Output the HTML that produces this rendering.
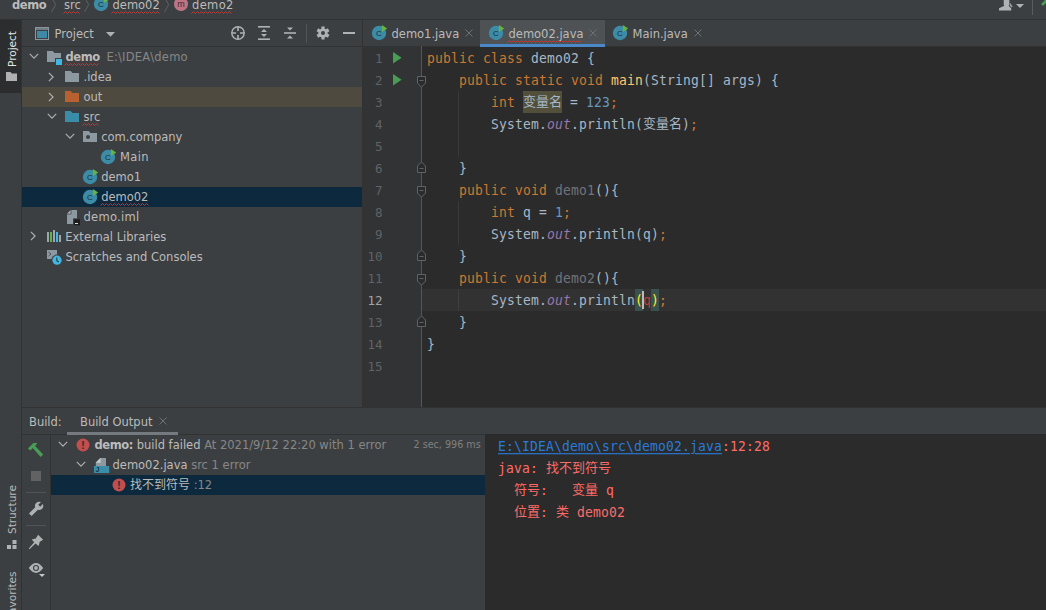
<!DOCTYPE html>
<html lang="zh">
<head>
<meta charset="utf-8">
<title>demo – demo02.java</title>
<style>
*{box-sizing:border-box;margin:0;padding:0}
html,body{width:1046px;height:610px;overflow:hidden;background:#3c3f41}
body{position:relative;font:11.5px/20px "DejaVu Sans","Liberation Sans","Noto Sans CJK SC",sans-serif;color:#bbbbbb}
.abs{position:absolute}
.t{position:absolute;white-space:pre;line-height:20px;height:20px}
.b,b{font-weight:bold;letter-spacing:-0.4px}
.g{color:#878787}
svg{position:absolute;overflow:visible}
.mono{font-family:"DejaVu Sans Mono","Liberation Mono","Noto Sans CJK SC",monospace;font-size:13px;letter-spacing:0.174px}
.cj{letter-spacing:0;font-family:"Noto Sans CJK SC",sans-serif;font-size:13px;line-height:0}
.code{position:absolute;left:427px;white-space:pre;height:22px;line-height:22px;color:#a9b7c6}
.code,.con{transform:scaleY(1.1);transform-origin:0 15.5px}
.code .cj,.con .cj{display:inline-block;transform:scaleY(.909);transform-origin:0 70%}
.k{color:#cc7832}.n{color:#6897bb}.m{color:#ffc66d}.u{color:#72737a}.f{color:#9876aa;font-style:italic}
.ln{position:absolute;left:363px;width:19.5px;font-size:12.5px!important;letter-spacing:0!important;text-align:right;height:22px;line-height:22px;color:#606366}
.con{position:absolute;left:498px;white-space:pre;height:22px;line-height:22px;color:#ff6b68}
</style>
</head>
<body>
<!-- ===== navigation bar ===== -->
<div class="abs" style="left:0px;top:19px;width:1046px;height:1px;background:#323232;"></div>
<div class="t b" style="left:12px;top:-5px;">demo</div>
<svg style="left:51px;top:0px" width="8" height="16" ><path d="M0.5 -2.7 L4.7 4.6 L0.5 11.9" fill="none" stroke="#5e6163" stroke-width="1"/></svg>
<div class="t " style="left:64px;top:-5px;">src</div>
<svg style="left:0;top:0" width="1" height="1"><polyline points="63.5,13.5 65.5,11.5 67.5,13.5 69.5,11.5 71.5,13.5 73.5,11.5 75.5,13.5 77.5,11.5 79.5,13.5" fill="none" stroke="#bc3f3c" stroke-width="0.95"/></svg>
<svg style="left:84px;top:0px" width="8" height="16" ><path d="M0.5 -2.7 L4.7 4.6 L0.5 11.9" fill="none" stroke="#5e6163" stroke-width="1"/></svg>
<svg style="left:100.8px;top:4px" width="1" height="1"><circle cx="0" cy="0" r="7.2" fill="#3c8ca8"/><text x="-0.2" y="2.75" text-anchor="middle" font-family="Liberation Sans,sans-serif" font-size="8" fill="#182d37">C</text><path d="M2.9 -8 L8.2 -4.5 L2.9 -1.1Z" fill="#62b543"/></svg>
<div class="t " style="left:112.5px;top:-5px;">demo02</div>
<svg style="left:0;top:0" width="1" height="1"><polyline points="111.5,13.5 113.5,11.5 115.5,13.5 117.5,11.5 119.5,13.5 121.5,11.5 123.5,13.5 125.5,11.5 127.5,13.5 129.5,11.5 131.5,13.5 133.5,11.5 135.5,13.5 137.5,11.5 139.5,13.5 141.5,11.5 143.5,13.5 145.5,11.5 147.5,13.5 149.5,11.5 151.5,13.5 153.5,11.5 155.5,13.5 157.5,11.5 159.5,13.5" fill="none" stroke="#bc3f3c" stroke-width="0.95"/></svg>
<svg style="left:164px;top:0px" width="8" height="16" ><path d="M0.5 -2.7 L4.7 4.6 L0.5 11.9" fill="none" stroke="#5e6163" stroke-width="1"/></svg>
<svg style="left:174px;top:-3px" width="14" height="14" ><circle cx="7" cy="7" r="7" fill="#bf7485"/><text x="7" y="10.2" text-anchor="middle" font-family="Liberation Sans,sans-serif" font-size="9" fill="#3b2b30">m</text></svg>
<div class="t " style="left:192px;top:-5px;letter-spacing:.35px">demo2</div>
<svg style="left:0;top:0" width="1" height="1"><polyline points="191.5,13.5 193.5,11.5 195.5,13.5 197.5,11.5 199.5,13.5 201.5,11.5 203.5,13.5 205.5,11.5 207.5,13.5 209.5,11.5 211.5,13.5 213.5,11.5 215.5,13.5 217.5,11.5 219.5,13.5 221.5,11.5 223.5,13.5 225.5,11.5 227.5,13.5 229.5,11.5 231.5,13.5" fill="none" stroke="#bc3f3c" stroke-width="0.95"/></svg>
<svg style="left:999px;top:0px" width="14" height="11" ><path d="M4.7 0 H10.3 V4 Q10.3 5.3 9.5 5.8 L12.2 8.3 V10.6 H0 V8.3 L5.4 5.8 Q4.7 5.3 4.7 4Z" fill="#afb1b3"/><path d="M10.8 2.4 L13.6 6.6 L12.8 7.6 L10.6 5.6Z" fill="#a0a2a4"/></svg>
<svg style="left:1016px;top:4px" width="8" height="4" ><path d="M0 0 H8 L4 4Z" fill="#afb1b3"/></svg>
<div class="abs" style="left:1032px;top:0px;width:1px;height:15px;background:#5a5d5f;"></div>
<svg style="left:1040px;top:0px" width="6" height="6" ><path d="M1 4 L6 -1 L8 1 L3 6Z" fill="#499c54"/></svg>
<!-- ===== left tool stripe ===== -->
<div class="abs" style="left:21px;top:20px;width:1px;height:590px;background:#323232;"></div>
<div class="abs" style="left:0px;top:20px;width:21px;height:73px;background:#2b2d2e;"></div>
<div class="t " style="left:1.5px;top:66.5px;transform-origin:0 0;transform:rotate(-90deg);font-size:10.5px;color:#e4e4e4">Project</div>
<svg style="left:6px;top:72px" width="11" height="9" fill="#afb1b3"><path d="M0 0 H4.5 L5.8 1.6 H11 V9 H0Z"/></svg>
<div class="t " style="left:1.5px;top:533.5px;transform-origin:0 0;transform:rotate(-90deg);font-size:10.5px;">Structure</div>
<svg style="left:7px;top:540px" width="10" height="9" fill="#afb1b3"><rect x="5.5" y="0" width="4" height="4"/><rect x="0" y="5" width="4" height="4"/><rect x="5.5" y="5" width="4" height="4"/></svg>
<div class="t " style="left:1.5px;top:619px;transform-origin:0 0;transform:rotate(-90deg);font-size:10.5px;">Favorites</div>
<!-- ===== project tool window ===== -->
<svg style="left:35px;top:27px" width="14" height="13" ><rect x="0.5" y="0.5" width="13" height="12" fill="none" stroke="#8a969d"/><rect x="1" y="1" width="12" height="2" fill="#717c83"/><rect x="2" y="4" width="10" height="7" fill="#3e8aa6"/></svg>
<div class="t " style="left:54.5px;top:24px;">Project</div>
<svg style="left:106px;top:32px" width="9" height="5" ><path d="M0 0 H9 L4.5 4.8Z" fill="#afb1b3"/></svg>
<svg style="left:231px;top:26px" width="14" height="14" ><circle cx="7" cy="7" r="6.2" fill="none" stroke="#afb1b3" stroke-width="1.4"/><path d="M7 0.5V5M7 9V13.5M0.5 7H5M9 7H13.5" stroke="#afb1b3" stroke-width="1.6" fill="none"/></svg>
<svg style="left:258px;top:26px" width="12" height="14" fill="#afb1b3"><rect x="0" y="0" width="12" height="1.6"/><rect x="0" y="12.4" width="12" height="1.6"/><path d="M6 3 L9 6 H3Z"/><path d="M6 11 L9 8 H3Z"/></svg>
<svg style="left:284px;top:26px" width="12" height="14" fill="#afb1b3"><rect x="0" y="6.2" width="12" height="1.6"/><path d="M6 4.6 L9 1.4 H3Z"/><path d="M6 9.4 L9 12.6 H3Z"/></svg>
<div class="abs" style="left:306px;top:24px;width:1px;height:19px;background:#515456;"></div>
<svg style="left:316px;top:26px" width="14" height="14" ><g transform="translate(7 7)"><g fill="#afb1b3"><rect x="-1.6" y="-6.5" width="3.2" height="13"/><rect x="-1.6" y="-6.5" width="3.2" height="13" transform="rotate(60)"/><rect x="-1.6" y="-6.5" width="3.2" height="13" transform="rotate(120)"/><circle r="4.6"/></g><circle r="2" fill="#3c3f41"/></g></svg>
<div class="abs" style="left:343px;top:32px;width:12px;height:2px;background:#afb1b3;"></div>
<div class="abs" style="left:22px;top:46px;width:340px;height:1px;background:#323232;"></div>
<div class="abs" style="left:362px;top:20px;width:1px;height:388px;background:#323232;"></div>
<div class="abs" style="left:22px;top:87px;width:340px;height:20px;background:#4e4a3f;"></div>
<div class="abs" style="left:22px;top:187px;width:340px;height:20px;background:#0d293e;"></div>
<svg style="left:33.5px;top:56.4px" width="1" height="1"><path d="M-4.2 -2.1 L0 2.1 L4.2 -2.1" fill="none" stroke="#adb0b3" stroke-width="1.2"/></svg>
<svg style="left:47px;top:51px" width="14" height="11" fill="#8d99a1"><path d="M0 0 H5.8 L7.4 2 H14 V11 H0Z"/></svg>
<svg style="left:55px;top:58px" width="8" height="8" ><rect width="8" height="8" fill="#3c3f41"/><rect x="1" y="1" width="6" height="6" fill="#40b6e0"/></svg>
<div class="t b" style="left:65.5px;top:47px;">demo</div>
<svg style="left:0;top:0" width="1" height="1"><polyline points="64.5,65.5 66.5,63.5 68.5,65.5 70.5,63.5 72.5,65.5 74.5,63.5 76.5,65.5 78.5,63.5 80.5,65.5 82.5,63.5 84.5,65.5 86.5,63.5 88.5,65.5 90.5,63.5 92.5,65.5 94.5,63.5 96.5,65.5 98.5,63.5" fill="none" stroke="#bc3f3c" stroke-width="0.95"/></svg>
<div class="t g" style="left:106.5px;top:47px;letter-spacing:.2px">E:\IDEA\demo</div>
<svg style="left:51.3px;top:76.6px" width="1" height="1"><path d="M-2.1 -4.2 L2.1 0 L-2.1 4.2" fill="none" stroke="#adb0b3" stroke-width="1.2"/></svg>
<svg style="left:65px;top:71px" width="14" height="11" fill="#8d99a1"><path d="M0 0 H5.8 L7.4 2 H14 V11 H0Z"/></svg>
<div class="t " style="left:83.5px;top:67px;">.idea</div>
<svg style="left:51.3px;top:96.6px" width="1" height="1"><path d="M-2.1 -4.2 L2.1 0 L-2.1 4.2" fill="none" stroke="#adb0b3" stroke-width="1.2"/></svg>
<svg style="left:65px;top:91px" width="14" height="11" fill="#b8602f"><path d="M0 0 H5.8 L7.4 2 H14 V11 H0Z"/></svg>
<div class="t " style="left:83.5px;top:87px;">out</div>
<svg style="left:51.5px;top:116.4px" width="1" height="1"><path d="M-4.2 -2.1 L0 2.1 L4.2 -2.1" fill="none" stroke="#adb0b3" stroke-width="1.2"/></svg>
<svg style="left:65px;top:111px" width="14" height="11" fill="#3a8da8"><path d="M0 0 H5.8 L7.4 2 H14 V11 H0Z"/></svg>
<div class="t " style="left:83.5px;top:107px;">src</div>
<svg style="left:0;top:0" width="1" height="1"><polyline points="82.5,125.5 84.5,123.5 86.5,125.5 88.5,123.5 90.5,125.5 92.5,123.5 94.5,125.5 96.5,123.5 98.5,125.5" fill="none" stroke="#bc3f3c" stroke-width="0.95"/></svg>
<svg style="left:69.5px;top:136.4px" width="1" height="1"><path d="M-4.2 -2.1 L0 2.1 L4.2 -2.1" fill="none" stroke="#adb0b3" stroke-width="1.2"/></svg>
<svg style="left:83px;top:131px" width="14" height="11" fill="#8d99a1"><path d="M0 0 H5.8 L7.4 2 H14 V11 H0Z"/></svg>
<svg style="left:86px;top:135.3px" width="4" height="4" ><circle cx="2" cy="2" r="2" fill="#3c3f41"/></svg>
<div class="t " style="left:101.2px;top:127px;">com.company</div>
<svg style="left:108px;top:157px" width="1" height="1"><circle cx="0" cy="0" r="7.2" fill="#3c8ca8"/><text x="-0.2" y="2.75" text-anchor="middle" font-family="Liberation Sans,sans-serif" font-size="8" fill="#182d37">C</text><path d="M2.9 -8 L8.2 -4.5 L2.9 -1.1Z" fill="#62b543"/></svg>
<div class="t " style="left:120px;top:147px;letter-spacing:.4px">Main</div>
<svg style="left:90px;top:177px" width="1" height="1"><circle cx="0" cy="0" r="7.2" fill="#3c8ca8"/><text x="-0.2" y="2.75" text-anchor="middle" font-family="Liberation Sans,sans-serif" font-size="8" fill="#182d37">C</text><path d="M2.9 -8 L8.2 -4.5 L2.9 -1.1Z" fill="#62b543"/></svg>
<div class="t " style="left:101.2px;top:167px;">demo1</div>
<svg style="left:90px;top:197px" width="1" height="1"><circle cx="0" cy="0" r="7.2" fill="#3c8ca8"/><text x="-0.2" y="2.75" text-anchor="middle" font-family="Liberation Sans,sans-serif" font-size="8" fill="#182d37">C</text><path d="M2.9 -8 L8.2 -4.5 L2.9 -1.1Z" fill="#62b543"/></svg>
<div class="t " style="left:101.2px;top:187px;">demo02</div>
<svg style="left:0;top:0" width="1" height="1"><polyline points="100.5,205.5 102.5,203.5 104.5,205.5 106.5,203.5 108.5,205.5 110.5,203.5 112.5,205.5 114.5,203.5 116.5,205.5 118.5,203.5 120.5,205.5 122.5,203.5 124.5,205.5 126.5,203.5 128.5,205.5 130.5,203.5 132.5,205.5 134.5,203.5 136.5,205.5 138.5,203.5 140.5,205.5 142.5,203.5 144.5,205.5 146.5,203.5 148.5,205.5" fill="none" stroke="#bc3f3c" stroke-width="0.95"/></svg>
<svg style="left:67px;top:210px" width="14" height="15" ><path d="M4 0 H10 V14 H0 V4Z" fill="#8d99a1"/><path d="M0 4 H4 V0Z" fill="#b6bec3"/><path d="M0 4 H4 V0" fill="none" stroke="#3c3f41" stroke-width=".8"/><rect x="6" y="8.3" width="8" height="7" fill="#3c3f41"/><rect x="7" y="9.3" width="6" height="6" fill="#1d1d1d"/><rect x="8" y="13" width="3" height="1" fill="#e0e0e0"/></svg>
<div class="t " style="left:83.5px;top:207px;letter-spacing:.3px">demo.iml</div>
<svg style="left:33.4px;top:236.3px" width="1" height="1"><path d="M-2.1 -4.2 L2.1 0 L-2.1 4.2" fill="none" stroke="#adb0b3" stroke-width="1.2"/></svg>
<svg style="left:47px;top:230px" width="14" height="12" ><rect x="0" y="2" width="2" height="10" fill="#9aa7b0"/><rect x="3" y="2" width="2" height="10" fill="#62b543"/><rect x="6" y="0" width="2" height="12" fill="#9aa7b0"/><rect x="9" y="2" width="2" height="10" fill="#40b6e0"/><rect x="12" y="5" width="2" height="7" fill="#9aa7b0"/></svg>
<div class="t " style="left:65.3px;top:227px;">External Libraries</div>
<svg style="left:47px;top:250px" width="16" height="16" ><rect x="0" y="0" width="10" height="9" fill="#8d99a1"/><path d="M1.5 2 L4 4 L1.5 6" fill="none" stroke="#4c5357" stroke-width="1"/><circle cx="10" cy="10.2" r="5.6" fill="#3c3f41"/><circle cx="10" cy="10.2" r="4.6" fill="#40b6e0"/><path d="M9.8 7.5 V10.6 L11.8 12" fill="none" stroke="#2b3b44" stroke-width="1.1"/></svg>
<div class="t " style="left:65.5px;top:247px;">Scratches and Consoles</div>
<!-- ===== editor ===== -->
<div class="abs" style="left:480px;top:20px;width:125px;height:26px;background:#4e5254;"></div>
<svg style="left:379px;top:33px" width="1" height="1"><circle cx="0" cy="0" r="7.2" fill="#3c8ca8"/><text x="-0.2" y="2.75" text-anchor="middle" font-family="Liberation Sans,sans-serif" font-size="8" fill="#182d37">C</text><path d="M2.9 -8 L8.2 -4.5 L2.9 -1.1Z" fill="#62b543"/></svg>
<div class="t " style="left:391.5px;top:24px;">demo1.java</div>
<svg style="left:465px;top:29px" width="8" height="8" ><path d="M0.5 0.5 L7.5 7.5 M7.5 0.5 L0.5 7.5" fill="none" stroke="#6e7173" stroke-width="1"/></svg>
<svg style="left:496px;top:33px" width="1" height="1"><circle cx="0" cy="0" r="7.2" fill="#3c8ca8"/><text x="-0.2" y="2.75" text-anchor="middle" font-family="Liberation Sans,sans-serif" font-size="8" fill="#182d37">C</text><path d="M2.9 -8 L8.2 -4.5 L2.9 -1.1Z" fill="#62b543"/></svg>
<div class="t " style="left:508.5px;top:24px;">demo02.java</div>
<svg style="left:0;top:0" width="1" height="1"><polyline points="507.5,42.5 509.5,40.5 511.5,42.5 513.5,40.5 515.5,42.5 517.5,40.5 519.5,42.5 521.5,40.5 523.5,42.5 525.5,40.5 527.5,42.5 529.5,40.5 531.5,42.5 533.5,40.5 535.5,42.5 537.5,40.5 539.5,42.5 541.5,40.5 543.5,42.5 545.5,40.5 547.5,42.5 549.5,40.5 551.5,42.5 553.5,40.5 555.5,42.5 557.5,40.5 559.5,42.5 561.5,40.5 563.5,42.5 565.5,40.5 567.5,42.5 569.5,40.5 571.5,42.5 573.5,40.5 575.5,42.5 577.5,40.5 579.5,42.5 581.5,40.5" fill="none" stroke="#bc3f3c" stroke-width="0.95"/></svg>
<svg style="left:589px;top:29px" width="8" height="8" ><path d="M0.5 0.5 L7.5 7.5 M7.5 0.5 L0.5 7.5" fill="none" stroke="#6e7173" stroke-width="1"/></svg>
<svg style="left:620px;top:33px" width="1" height="1"><circle cx="0" cy="0" r="7.2" fill="#3c8ca8"/><text x="-0.2" y="2.75" text-anchor="middle" font-family="Liberation Sans,sans-serif" font-size="8" fill="#182d37">C</text><path d="M2.9 -8 L8.2 -4.5 L2.9 -1.1Z" fill="#62b543"/></svg>
<div class="t " style="left:632.5px;top:24px;">Main.java</div>
<svg style="left:694px;top:29px" width="8" height="8" ><path d="M0.5 0.5 L7.5 7.5 M7.5 0.5 L0.5 7.5" fill="none" stroke="#6e7173" stroke-width="1"/></svg>
<div class="abs" style="left:363px;top:46px;width:683px;height:361px;background:#2b2b2b;"></div>
<div class="abs" style="left:363px;top:46px;width:683px;height:1px;background:#323232;"></div>
<div class="abs" style="left:480px;top:44px;width:125px;height:3px;background:#4a88c7;"></div>
<div class="abs" style="left:363px;top:46px;width:58px;height:361px;background:#313335;"></div>
<div class="abs" style="left:421px;top:289px;width:625px;height:22px;background:#323232;"></div>
<div class="abs" style="left:421px;top:46px;width:1px;height:361px;background:#555555;"></div>
<div class="abs" style="left:458px;top:91px;width:1px;height:66px;background:#393939;"></div>
<div class="abs" style="left:458px;top:201px;width:1px;height:44px;background:#393939;"></div>
<div class="abs" style="left:458px;top:289px;width:1px;height:22px;background:#404040;"></div>
<div class="ln mono" style="top:48px">1</div>
<div class="ln mono" style="top:70px">2</div>
<div class="ln mono" style="top:92px">3</div>
<div class="ln mono" style="top:114px">4</div>
<div class="ln mono" style="top:136px">5</div>
<div class="ln mono" style="top:158px">6</div>
<div class="ln mono" style="top:180px">7</div>
<div class="ln mono" style="top:202px">8</div>
<div class="ln mono" style="top:224px">9</div>
<div class="ln mono" style="top:246px">10</div>
<div class="ln mono" style="top:268px">11</div>
<div class="ln mono" style="top:290px;color:#a4a3a3">12</div>
<div class="ln mono" style="top:312px">13</div>
<div class="ln mono" style="top:334px">14</div>
<div class="ln mono" style="top:356px">15</div>
<svg style="left:393px;top:52px" width="9" height="12" ><path d="M0 0 L8.6 5.8 L0 11.6Z" fill="#499c54"/></svg>
<svg style="left:393px;top:74px" width="9" height="12" ><path d="M0 0 L8.6 5.8 L0 11.6Z" fill="#499c54"/></svg>
<svg style="left:417px;top:76px" width="9" height="11" ><path d="M0.5 0.5 H8.5 V7 L4.5 11.2 L0.5 7Z" fill="#2b2b2b" stroke="#606366"/><path d="M2.5 4.5 H6.5" stroke="#606366"/></svg>
<svg style="left:417px;top:186px" width="9" height="11" ><path d="M0.5 0.5 H8.5 V7 L4.5 11.2 L0.5 7Z" fill="#2b2b2b" stroke="#606366"/><path d="M2.5 4.5 H6.5" stroke="#606366"/></svg>
<svg style="left:417px;top:274px" width="9" height="11" ><path d="M0.5 0.5 H8.5 V7 L4.5 11.2 L0.5 7Z" fill="#2b2b2b" stroke="#606366"/><path d="M2.5 4.5 H6.5" stroke="#606366"/></svg>
<svg style="left:417px;top:162px" width="9" height="11" ><path d="M0.5 10.5 H8.5 V4 L4.5 -0.2 L0.5 4Z" fill="#2b2b2b" stroke="#606366"/><path d="M2.5 6.5 H6.5" stroke="#606366"/></svg>
<svg style="left:417px;top:250px" width="9" height="11" ><path d="M0.5 10.5 H8.5 V4 L4.5 -0.2 L0.5 4Z" fill="#2b2b2b" stroke="#606366"/><path d="M2.5 6.5 H6.5" stroke="#606366"/></svg>
<svg style="left:417px;top:316px" width="9" height="11" ><path d="M0.5 10.5 H8.5 V4 L4.5 -0.2 L0.5 4Z" fill="#2b2b2b" stroke="#606366"/><path d="M2.5 6.5 H6.5" stroke="#606366"/></svg>
<div class="abs" style="left:523px;top:91px;width:39px;height:22px;background:#52503a;"></div>
<div class="abs" style="left:635px;top:289px;width:8px;height:22px;background:#3b514d;"></div>
<div class="abs" style="left:651px;top:289px;width:8px;height:22px;background:#3b514d;"></div>
<div class="code mono" style="top:48px"><span class="k">public class</span> demo02 {</div>
<div class="code mono" style="top:70px">    <span class="k">public static void</span> <span class="m">main</span>(String[] args) {</div>
<div class="code mono" style="top:92px">        <span class="k">int</span> <span class="cj">变量名</span> = <span class="n">123</span><span class="k">;</span></div>
<div class="code mono" style="top:114px">        System.<span class="f">out</span>.println(<span class="cj">变量名</span>)<span class="k">;</span></div>
<div class="code mono" style="top:158px">    }</div>
<div class="code mono" style="top:180px">    <span class="k">public void</span> <span class="u">demo1</span>(){</div>
<div class="code mono" style="top:202px">        <span class="k">int</span> q = <span class="n">1</span><span class="k">;</span></div>
<div class="code mono" style="top:224px">        System.<span class="f">out</span>.println(q)<span class="k">;</span></div>
<div class="code mono" style="top:246px">    }</div>
<div class="code mono" style="top:268px">    <span class="k">public void</span> <span class="u">demo2</span>(){</div>
<div class="code mono" style="top:290px">        System.<span class="f">out</span>.println<span style="color:#ffef28">(</span><span style="color:#bc3f3c">q</span><span style="color:#ffef28">)</span><span class="k">;</span></div>
<div class="code mono" style="top:312px">    }</div>
<div class="code mono" style="top:334px">}</div>
<div class="abs" style="left:642px;top:291px;width:2px;height:18px;background:#bbbbbb;"></div>
<!-- ===== build tool window ===== -->
<div class="abs" style="left:22px;top:407px;width:1024px;height:1px;background:#323232;"></div>
<div class="abs" style="left:22px;top:408px;width:1024px;height:26px;background:#3c3f41;"></div>
<div class="abs" style="left:22px;top:434px;width:1024px;height:1px;background:#323232;"></div>
<div class="t " style="left:29px;top:412px;">Build:</div>
<div class="t " style="left:80px;top:412px;">Build Output</div>
<svg style="left:159px;top:417px" width="8" height="8" ><path d="M0.5 0.5 L7.5 7.5 M7.5 0.5 L0.5 7.5" fill="none" stroke="#6e7173" stroke-width="1"/></svg>
<div class="abs" style="left:67px;top:432px;width:111px;height:3px;background:#747a80;"></div>
<div class="abs" style="left:50px;top:435px;width:1px;height:175px;background:#323232;"></div>
<svg style="left:27px;top:442px" width="17" height="15" ><path d="M0.9 6.4 L6.4 0.9 L10.1 1.1 L9.8 2.1 L3.4 8.6Z M5.6 5.8 L7.9 3.8 L16.2 12.6 L13.6 15Z" fill="#499c54"/></svg>
<div class="abs" style="left:31px;top:471px;width:10px;height:10px;background:#606263;"></div>
<div class="abs" style="left:26px;top:492px;width:20px;height:1px;background:#515456;"></div>
<svg style="left:26px;top:498px" width="20" height="20" ><path d="M4.3 16.7 L10.8 10.2" stroke="#afb1b3" stroke-width="3.7" fill="none"/><circle cx="13.1" cy="7.9" r="4.2" fill="#afb1b3"/><path d="M13.2 7.8 L17.6 3.4" stroke="#3c3f41" stroke-width="2.7" fill="none"/></svg>
<div class="abs" style="left:26px;top:525px;width:20px;height:1px;background:#515456;"></div>
<svg style="left:26px;top:532px" width="20" height="20" ><path d="M12.1 2.8 L17.2 7.7 L13.8 9.8 L12.6 14.1 L9.5 11.5 L3.5 17.2 L2.8 16.4 L8.2 10.2 L5.7 7.4 L9.8 6.4Z" fill="#afb1b3"/></svg>
<svg style="left:26px;top:558px" width="20" height="20" ><path d="M2.8 10 Q10 0.2 17.2 10 Q10 19.8 2.8 10Z" fill="#afb1b3"/><circle cx="10" cy="10" r="3" fill="#3c3f41"/><circle cx="10" cy="10" r="1.9" fill="#afb1b3"/><path d="M11.6 15 H20.4 L16 20.2Z" fill="#3c3f41"/><path d="M13 16 H19 L16 19Z" fill="#c8c9ca"/></svg>
<div class="abs" style="left:51px;top:475px;width:434px;height:20px;background:#0d293e;"></div>
<svg style="left:62.5px;top:444.3px" width="1" height="1"><path d="M-4.2 -2.1 L0 2.1 L4.2 -2.1" fill="none" stroke="#adb0b3" stroke-width="1.2"/></svg>
<svg style="left:83px;top:445px" width="1" height="1"><circle cx="0" cy="0" r="6.5" fill="#c24e4e"/><text x="0" y="4.2" text-anchor="middle" font-family="Liberation Sans,sans-serif" font-weight="bold" font-size="11.5" fill="#2f3234">!</text></svg>
<div class="t " style="left:94.5px;top:435px;"><b>demo:</b> build failed <span class="g">At 2021/9/12 22:20 with 1 error</span></div>
<div class="t " style="left:413.5px;top:435px;font-size:9.6px;color:#808080">2 sec, 996 ms</div>
<svg style="left:80.6px;top:464.3px" width="1" height="1"><path d="M-4.2 -2.1 L0 2.1 L4.2 -2.1" fill="none" stroke="#adb0b3" stroke-width="1.2"/></svg>
<svg style="left:94px;top:458px" width="15" height="15" ><path d="M1.8 4.6 L6.4 0 H12 V8 H1.8Z" fill="#8d99a1"/><path d="M1.6 4.8 H6.6 V-0.2Z" fill="#c5cbcf"/><rect x="0" y="8" width="15.2" height="7" fill="#3a8da8"/><text x="1.8" y="14" font-family="Liberation Sans,sans-serif" font-weight="bold" font-size="6.5" fill="#17303b">J</text></svg>
<div class="t " style="left:112.5px;top:455px;">demo02.java <span class="g">src 1 error</span></div>
<svg style="left:118.8px;top:485px" width="1" height="1"><circle cx="0" cy="0" r="6.5" fill="#c24e4e"/><text x="0" y="4.2" text-anchor="middle" font-family="Liberation Sans,sans-serif" font-weight="bold" font-size="11.5" fill="#2f3234">!</text></svg>
<div class="t " style="left:130px;top:475px;"><span style="font-size:12px">找不到符号</span> <span class="g">:12</span></div>
<div class="abs" style="left:485px;top:434px;width:561px;height:176px;background:#2b2b2b;"></div>
<div class="con mono" style="top:436px"><span style="color:#287bde;text-decoration:underline;text-underline-offset:2px">E:\IDEA\demo\src\demo02.java</span>:12:28</div>
<div class="con mono" style="top:458px">java: <span class="cj">找不到符号</span></div>
<div class="con mono" style="top:480px">  <span class="cj">符号</span>:   <span class="cj">变量</span> q</div>
<div class="con mono" style="top:502px">  <span class="cj">位置</span>: <span class="cj">类</span> demo02</div>
</body>
</html>
